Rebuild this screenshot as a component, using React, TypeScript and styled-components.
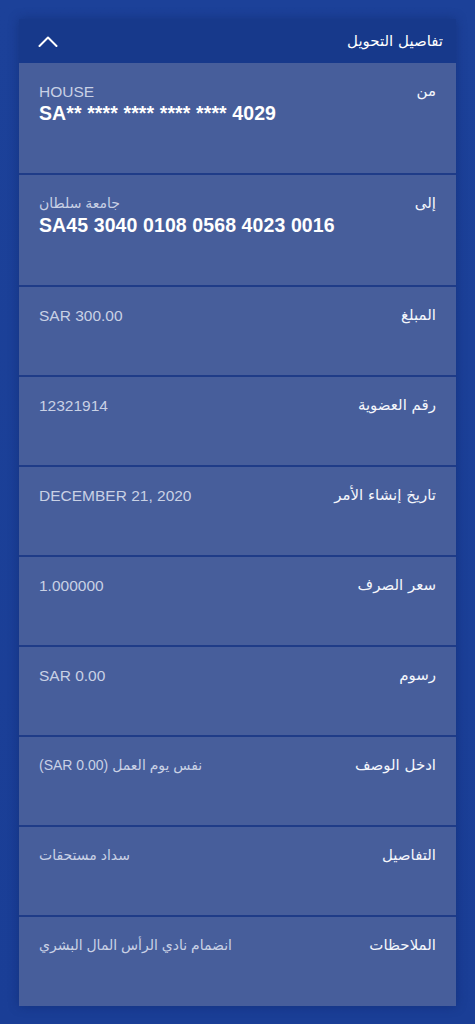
import React from 'react';
import styled, { createGlobalStyle } from 'styled-components';

const GlobalStyle = createGlobalStyle`
  html, body {
    margin: 0;
    padding: 0;
    background: #1b3f97;
  }
  body {
    font-family: 'Liberation Sans', 'DejaVu Sans', sans-serif;
  }
`;

const Page = styled.div`
  min-height: 1024px;
  box-sizing: border-box;
  padding: 19px 19px 19px;
  background: linear-gradient(180deg, #1c4199 0%, #1a3e96 100%);
`;

const Panel = styled.section`
  direction: rtl;
  box-shadow: 0 0 10px rgba(10, 25, 80, 0.35);
`;

const Header = styled.header`
  display: flex;
  align-items: center;
  justify-content: space-between;
  height: 44px;
  padding: 0 13px 0 18px;
  background: #17398b;
  color: #ffffff;
`;

const Title = styled.h2`
  margin: 0;
  font-family: 'DejaVu Sans', sans-serif;
  font-size: 15px;
  font-weight: normal;
  line-height: 20px;
`;

const Toggle = styled.button`
  display: flex;
  align-items: center;
  justify-content: center;
  width: 22px;
  height: 22px;
  padding: 0;
  border: 0;
  background: none;
  cursor: pointer;
`;

const Row = styled.div`
  display: flex;
  align-items: flex-start;
  justify-content: space-between;
  padding: 18px 20px 49px;
  background: #475e9b;
  border-bottom: 2px solid #1f3c88;

  &:last-child {
    border-bottom: 0;
    padding-bottom: 50px;
  }
`;

const Label = styled.div`
  font-family: 'DejaVu Sans', sans-serif;
  font-size: 15px;
  line-height: 21px;
  color: #f4f6fb;
`;

const Value = styled.div`
  display: flex;
  flex-direction: column;
  align-items: flex-start;
  direction: ltr;
`;

const Sub = styled.div<{ $arabic?: boolean }>`
  unicode-bidi: plaintext;
  font-family: 'Liberation Sans', 'DejaVu Sans', sans-serif;
  font-size: ${(p) => (p.$arabic ? '14px' : '15.5px')};
  line-height: 21px;
  color: #c9d1e5;
`;

const Account = styled.div`
  font-family: 'Liberation Sans', sans-serif;
  font-size: 19.5px;
  font-weight: bold;
  line-height: 22px;
  color: #ffffff;
  letter-spacing: 0.1px;
`;

type Item = { label: string; sub: string; account?: string };

const items: Item[] = [
  { label: 'من', sub: 'HOUSE', account: 'SA** **** **** **** **** 4029' },
  { label: 'إلى', sub: 'جامعة سلطان', account: 'SA45 3040 0108 0568 4023 0016' },
  { label: 'المبلغ', sub: 'SAR 300.00' },
  { label: 'رقم العضوية', sub: '12321914' },
  { label: 'تاريخ إنشاء الأمر', sub: 'DECEMBER 21, 2020' },
  { label: 'سعر الصرف', sub: '1.000000' },
  { label: 'رسوم', sub: 'SAR 0.00' },
  { label: 'ادخل الوصف', sub: 'نفس يوم العمل (SAR 0.00)' },
  { label: 'التفاصيل', sub: 'سداد مستحقات' },
  { label: 'الملاحظات', sub: 'انضمام نادي الرأس المال البشري' },
];

const isArabic = (s: string) => /[\u0600-\u06FF]/.test(s);

const ChevronUp = () => (
  <svg width="20" height="11" viewBox="0 0 20 11" fill="none">
    <path d="M1.5 10 L10 1.5 L18.5 10" stroke="#ffffff" strokeWidth="2" strokeLinecap="round" strokeLinejoin="round" />
  </svg>
);

const App = () => (
  <>
    <GlobalStyle />
    <Page>
      <Panel>
        <Header>
          <Title>تفاصيل التحويل</Title>
          <Toggle aria-label="collapse">
            <ChevronUp />
          </Toggle>
        </Header>
        {items.map((item) => (
          <Row key={item.label}>
            <Label>{item.label}</Label>
            <Value>
              <Sub $arabic={isArabic(item.sub)}>{item.sub}</Sub>
              {item.account && <Account>{item.account}</Account>}
            </Value>
          </Row>
        ))}
      </Panel>
    </Page>
  </>
);

export default App;
